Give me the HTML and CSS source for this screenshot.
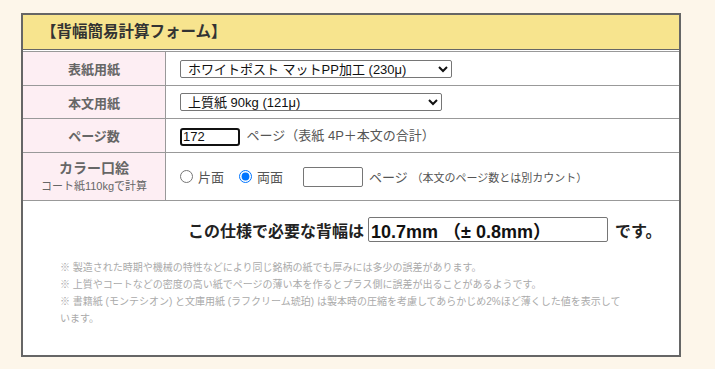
FILE: index.html
```html
<!DOCTYPE html>
<html lang="ja">
<head>
  <meta charset="UTF-8">
  <title>背幅簡易計算フォーム</title>
  <link rel="stylesheet" href="styles.css">
</head>
<body>

<div class="calc">
  <h3 class="calc-title">【背幅簡易計算フォーム】</h3>

  <table class="calc-table">
    <tr class="row-cover">
      <th>表紙用紙</th>
      <td>
        <select class="sel-cover">
          <option>ホワイトポスト マットPP加工 (230μ)</option>
        </select>
      </td>
    </tr>
    <tr class="row-body">
      <th>本文用紙</th>
      <td>
        <select class="sel-body">
          <option>上質紙 90kg (121μ)</option>
        </select>
      </td>
    </tr>
    <tr class="row-pages">
      <th>ページ数</th>
      <td>
        <input type="text" class="pages active" value="172"> ページ（表紙 4P＋本文の合計）
      </td>
    </tr>
    <tr class="row-color">
      <th>カラー口絵<span class="sub">コート紙110kgで計算</span></th>
      <td>
        <div class="color-line">
          <label class="radio"><input type="radio" name="side"> 片面</label>
          <label class="radio"><input type="radio" name="side" checked> 両面</label>
          <input type="text" class="pages color-pages">
          <span>ページ <small>（本文のページ数とは別カウント）</small></span>
        </div>
      </td>
    </tr>
  </table>

  <div class="result">
    <div class="result-line">
      <span>この仕様で必要な背幅は</span>
      <input type="text" class="result-box" value="10.7mm （± 0.8mm）">
      <span>です。</span>
    </div>
    <ul class="notes">
      <li>※ 製造された時期や機械の特性などにより同じ銘柄の紙でも厚みには多少の誤差があります。</li>
      <li>※ 上質やコートなどの密度の高い紙でページの薄い本を作るとプラス側に誤差が出ることがあるようです。</li>
      <li>※ 書籍紙 (モンテシオン) と文庫用紙 (ラフクリーム琥珀) は製本時の圧縮を考慮してあらかじめ2%ほど薄くした値を表示しています。</li>
    </ul>
  </div>
</div>

</body>
</html>
```

FILE: styles.css
```css
body {
  margin: 0;
  padding: 13px 0 0 21px;
  background-color: #fdf6ea;
  font-family: "Liberation Sans", "Noto Sans CJK JP", sans-serif;
  color: #555;
}
.calc {
  width: 656px;
  height: 340px;
  border: 2px solid #666;
  background: white;
}
.calc-title {
  margin: 0 0 1px;
  height: 34px;
  line-height: 34px;
  padding-left: 18px;
  background-color: #f7e48e;
  border-bottom: 1px solid #666;
  font-size: 15.5px;
  font-weight: bold;
  color: #333;
}
.calc-table {
  width: 100%;
  border-collapse: collapse;
  font-size: 13px;
}
.calc-table th,
.calc-table td {
  border-top: 1px solid #999;
  border-bottom: 1px solid #999;
  padding: 0;
}
.calc-table th {
  width: 142px;
  background-color: #fdeef3;
  border-right: 1px solid #999;
  font-size: 13px;
  color: #666;
  text-align: center;
}
.calc-table td {
  padding-left: 14px;
}
.row-cover th, .row-cover td { height: 33px; }
.row-body th, .row-body td { height: 32px; }
.row-pages th, .row-pages td { height: 33px; }
.row-color th, .row-color td { height: 47px; }
.row-color th {
  font-size: 14px;
  line-height: 18px;
}
.sub {
  display: block;
  font-size: 11px;
  font-weight: normal;
  line-height: 18px;
}
select {
  height: 18px;
  padding: 0 0 0 3px;
  border: 1px solid #767676;
  border-radius: 2px;
  background: white;
  font-family: "Liberation Sans", "Noto Sans CJK JP", sans-serif;
  font-size: 13px;
  color: #111;
}
.sel-cover { width: 272px; }
.sel-body { width: 262px; }
.pages {
  width: 60px;
  height: 18px;
  box-sizing: border-box;
  padding: 0 1px;
  margin: 0 3px 0 0;
  border: 1px solid #767676;
  border-radius: 2px;
  font-family: "Liberation Sans", "Noto Sans CJK JP", sans-serif;
  font-size: 13px;
  color: #111;
  vertical-align: middle;
}
.pages.active {
  border: 2px solid #111;
  border-radius: 3px;
}
.color-line {
  display: flex;
  align-items: center;
}
.radio {
  display: flex;
  align-items: center;
  margin-right: 15px;
}
.radio input {
  margin: 0 5px 0 0;
  width: 13px;
  height: 13px;
}
.color-pages {
  margin-left: 5px;
  height: 20px;
  margin-right: 6px;
}
small {
  font-size: 11px;
}
.result {
  padding: 16px 37px 0;
}
.result-line {
  display: flex;
  align-items: center;
  padding-left: 128px;
  white-space: nowrap;
  font-size: 16px;
  font-weight: bold;
  color: #222;
}
.result-box {
  flex-shrink: 0;
  width: 240px;
  height: 25px;
  box-sizing: border-box;
  margin: 0 7px 0 4px;
  padding: 0 2px;
  border: 1px solid #767676;
  border-radius: 2px;
  font-family: "Liberation Sans", "Noto Sans CJK JP", sans-serif;
  font-size: 18px;
  font-weight: bold;
  color: #111;
}
.notes {
  list-style: none;
  width: 570px;
  margin: 17px 0 0;
  padding: 0;
  font-size: 10px;
  line-height: 17px;
  color: #aaa;
}
```
